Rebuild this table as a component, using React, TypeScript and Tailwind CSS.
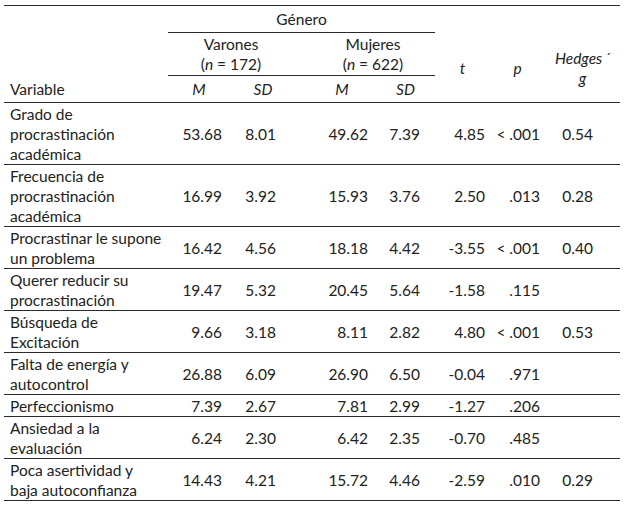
const cols = 'grid grid-cols-[164px_62px_72px_80px_53px_55px_55px_75px]'

type Row = {
  label: string[]
  m1: string
  sd1: string
  m2: string
  sd2: string
  t: string
  p: string
  g?: string
}

const rows: Row[] = [
  { label: ['Grado de', 'procrastinación', 'académica'], m1: '53.68', sd1: '8.01', m2: '49.62', sd2: '7.39', t: '4.85', p: '< .001', g: '0.54' },
  { label: ['Frecuencia de', 'procrastinación', 'académica'], m1: '16.99', sd1: '3.92', m2: '15.93', sd2: '3.76', t: '2.50', p: '.013', g: '0.28' },
  { label: ['Procrastinar le supone', 'un problema'], m1: '16.42', sd1: '4.56', m2: '18.18', sd2: '4.42', t: '-3.55', p: '< .001', g: '0.40' },
  { label: ['Querer reducir su', 'procrastinación'], m1: '19.47', sd1: '5.32', m2: '20.45', sd2: '5.64', t: '-1.58', p: '.115' },
  { label: ['Búsqueda de', 'Excitación'], m1: '9.66', sd1: '3.18', m2: '8.11', sd2: '2.82', t: '4.80', p: '< .001', g: '0.53' },
  { label: ['Falta de energía y', 'autocontrol'], m1: '26.88', sd1: '6.09', m2: '26.90', sd2: '6.50', t: '-0.04', p: '.971' },
  { label: ['Perfeccionismo'], m1: '7.39', sd1: '2.67', m2: '7.81', sd2: '2.99', t: '-1.27', p: '.206' },
  { label: ['Ansiedad a la', 'evaluación'], m1: '6.24', sd1: '2.30', m2: '6.42', sd2: '2.35', t: '-0.70', p: '.485' },
  { label: ['Poca asertividad y', 'baja autoconfianza'], m1: '14.43', sd1: '4.21', m2: '15.72', sd2: '4.46', t: '-2.59', p: '.010', g: '0.29' },
]

function DataRow({ row }: { row: Row }) {
  return (
    <div className={`${cols} border-b border-[#2a2a2a] pt-px`}>
      <div className="pl-[6px]">
        {row.label.map((l) => (
          <div key={l}>{l}</div>
        ))}
      </div>
      <div className="flex items-center justify-end pr-[8px]">{row.m1}</div>
      <div className="flex items-center justify-end pr-[26px]">{row.sd1}</div>
      <div className="flex items-center justify-end pr-[14px]">{row.m2}</div>
      <div className="flex items-center justify-end pr-[15px]">{row.sd2}</div>
      <div className="flex items-center justify-end pr-[5px]">{row.t}</div>
      <div className="flex items-center justify-end pr-[5px]">{row.p}</div>
      <div className="flex items-center justify-end pr-[27px]">{row.g ?? ''}</div>
    </div>
  )
}

export default function App() {
  return (
    <div className="w-[631px] h-[513px] bg-white pt-[5px] pl-[4px] text-[#222] text-[15.5px] leading-[20px] font-['Lato',sans-serif]">
      <div className="w-[616px] border-t border-[#2a2a2a]">
        <div className={`${cols} grid-rows-[27px_43px_26px] border-b border-[#2a2a2a]`}>
          <div className="col-start-2 col-span-4 row-start-1 flex items-center justify-center border-b border-[#2a2a2a]">
            Género
          </div>
          <div className="col-start-2 col-span-2 row-start-2 flex flex-col items-center justify-center pr-[8px] border-b border-[#2a2a2a]">
            <span>Varones</span>
            <span>(<i>n</i> = 172)</span>
          </div>
          <div className="col-start-4 col-span-2 row-start-2 flex flex-col items-center justify-center pl-[9px] border-b border-[#2a2a2a]">
            <span>Mujeres</span>
            <span>(<i>n</i> = 622)</span>
          </div>
          <div className="col-start-6 row-start-2 row-span-2 flex items-center justify-center italic">t</div>
          <div className="col-start-7 row-start-2 row-span-2 flex items-center justify-center italic">p</div>
          <div className="col-start-8 row-start-2 row-span-2 flex flex-col items-center justify-center italic">
            <span>Hedges<span className="ml-[2px]">´</span></span>
            <span>g</span>
          </div>
          <div className="col-start-1 row-start-3 flex items-center pl-[6px]">Variable</div>
          <div className="col-start-2 row-start-3 flex items-center justify-center italic">M</div>
          <div className="col-start-3 row-start-3 flex items-center justify-center italic pr-[6px]">SD</div>
          <div className="col-start-4 row-start-3 flex items-center justify-center italic">M</div>
          <div className="col-start-5 row-start-3 flex items-center justify-center italic pr-[6px]">SD</div>
        </div>
        {rows.map((r) => (
          <DataRow key={r.label[0]} row={r} />
        ))}
      </div>
    </div>
  )
}
